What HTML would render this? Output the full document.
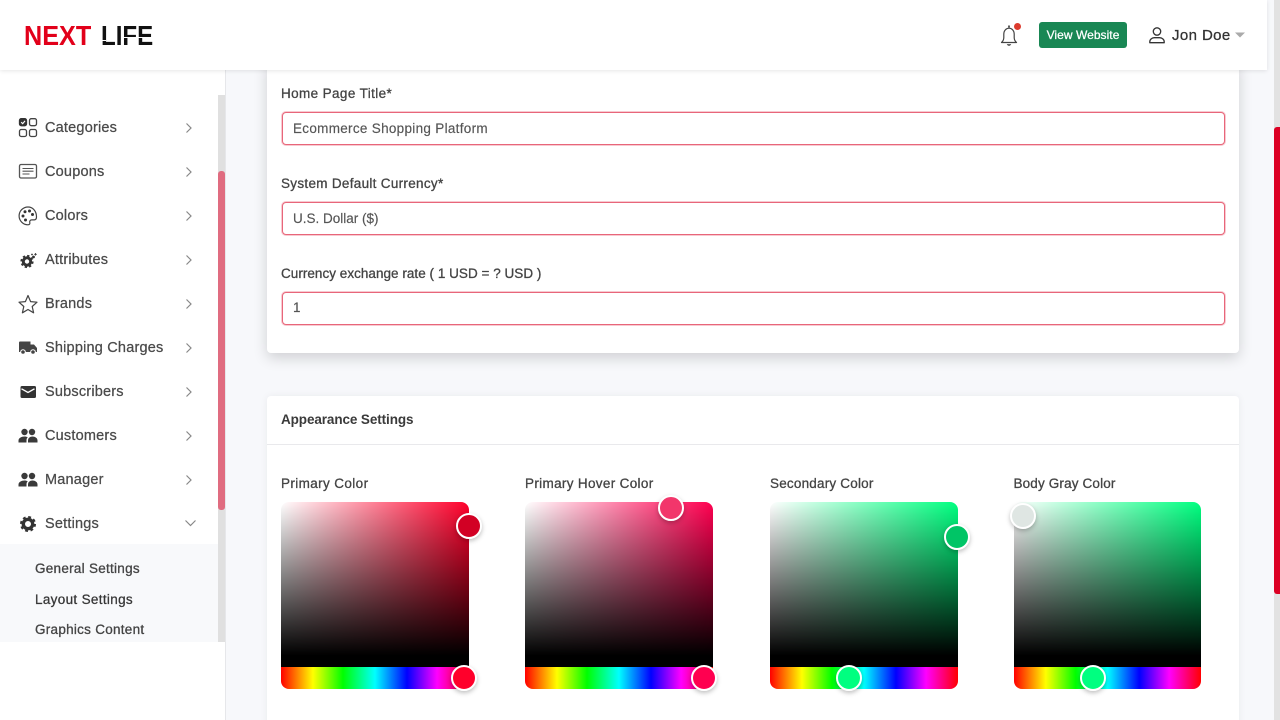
<!DOCTYPE html>
<html><head><meta charset="utf-8"><style>
html,body{margin:0;padding:0;width:1280px;height:720px;overflow:hidden;background:#f7f8fb}
body{font-family:"Liberation Sans",sans-serif;position:relative}
.a{position:absolute;white-space:nowrap}
.nav{left:45px;font-size:14.5px;line-height:20px;color:#4a4a4a;-webkit-text-stroke:.25px #4a4a4a;letter-spacing:.2px}
.sub{left:35px;font-size:13.5px;line-height:18px;color:#444;-webkit-text-stroke:.3px #444;letter-spacing:.27px}
.lbl{left:281px;font-size:13.5px;line-height:18px;color:#444;-webkit-text-stroke:.3px #444}
.inp{position:absolute;left:282px;width:941px;height:31px;border:1px solid #e8667a;border-radius:4px;background:#fff;box-shadow:0 0 0 1px rgba(232,102,122,.35)}
.val{left:293px;font-size:13.5px;line-height:18px;color:#555;-webkit-text-stroke:.15px #555}
.chev{position:absolute;left:184px}
.ic{position:absolute;left:17px;width:22px;height:22px}
.sat{position:absolute;top:502px;width:188px;height:165px;border-radius:8px 8px 0 0}
.hue{position:absolute;top:667px;width:188px;height:22px;border-radius:0 0 8px 8px;background:linear-gradient(to right,#f00 0%,#ff0 17%,#0f0 33%,#0ff 50%,#00f 67%,#f0f 83%,#f00 100%)}
.th{position:absolute;width:22px;height:22px;border:2px solid #fff;border-radius:50%;box-shadow:0 2px 5px rgba(0,0,0,.25)}
.cl{position:absolute;background:#fff;height:1px}
</style></head><body>

<!-- content cards -->
<div class="a" style="left:267px;top:60px;width:972px;height:293px;background:#fff;border-radius:4px;box-shadow:0 5px 14px rgba(0,0,0,.16)"></div>
<div class="a" style="left:267px;top:396px;width:972px;height:340px;background:#fff;border-radius:4px;box-shadow:0 0 8px rgba(0,0,0,.06)"></div>
<div class="a" style="left:267px;top:444px;width:972px;height:1px;background:#e9e9ec"></div>

<div class="a lbl" style="top:85px;letter-spacing:.38px">Home Page Title*</div>
<div class="inp" style="top:112px"></div>
<div class="a val" style="top:120px;letter-spacing:.3px">Ecommerce Shopping Platform</div>
<div class="a lbl" style="top:175px;letter-spacing:.3px">System Default Currency*</div>
<div class="inp" style="top:202px"></div>
<div class="a val" style="top:210px">U.S. Dollar ($)</div>
<div class="a lbl" style="top:265px;letter-spacing:.03px">Currency exchange rate ( 1 USD = ? USD )</div>
<div class="inp" style="top:292px"></div>
<div class="a val" style="top:299px">1</div>

<div class="a" style="left:281px;top:411px;font-size:13.5px;line-height:18px;font-weight:bold;color:#3a3a3a;letter-spacing:-.1px">Appearance Settings</div>

<div class="a lbl" style="top:475px;letter-spacing:.38px">Primary Color</div>
<div class="a lbl" style="top:475px;left:525px;letter-spacing:.33px">Primary Hover Color</div>
<div class="a lbl" style="top:475px;left:770px;letter-spacing:.2px">Secondary Color</div>
<div class="a lbl" style="top:475px;left:1013.5px;letter-spacing:.15px">Body Gray Color</div>

<div class="sat" style="left:281px;background:linear-gradient(to top,#000 7%,rgba(0,0,0,0)),linear-gradient(to right,#fff,#ff002b)"></div>
<div class="hue" style="left:281px"></div>
<div class="th" style="left:456px;top:513px;background:#d20024"></div>
<div class="th" style="left:451px;top:665px;background:#ff002b"></div>

<div class="sat" style="left:525px;background:linear-gradient(to top,#000 7%,rgba(0,0,0,0)),linear-gradient(to right,#fff,#ff0050)"></div>
<div class="hue" style="left:525px"></div>
<div class="th" style="left:658px;top:495px;background:#f2366b"></div>
<div class="th" style="left:691px;top:665px;background:#ff0050"></div>

<div class="sat" style="left:770px;background:linear-gradient(to top,#000 7%,rgba(0,0,0,0)),linear-gradient(to right,#fff,#00ff80)"></div>
<div class="hue" style="left:770px"></div>
<div class="th" style="left:944px;top:524px;background:#00c566"></div>
<div class="th" style="left:836px;top:665px;background:#00ff80"></div>

<div class="sat" style="left:1014px;width:187px;background:linear-gradient(to top,#000 7%,rgba(0,0,0,0)),linear-gradient(to right,#fff,#00ff80)"></div>
<div class="hue" style="left:1014px;width:187px"></div>
<div class="th" style="left:1010px;top:503px;background:#dfe6e3"></div>
<div class="th" style="left:1080px;top:665px;background:#00ff80"></div>

<!-- page scrollbar -->
<div class="a" style="left:1274px;top:0;width:6px;height:720px;background:#e2e2e2"></div>
<div class="a" style="left:1274px;top:127px;width:6px;height:467px;background:#dc0024;border-radius:3px 0 0 3px"></div>

<!-- sidebar -->
<div class="a" style="left:0;top:0;width:225px;height:720px;background:#fff;border-right:1px solid #e6e7ea"></div>
<div class="a" style="left:0;top:544px;width:218px;height:98px;background:#f8f9fb"></div>
<div class="a" style="left:218px;top:95px;width:7px;height:547px;background:#e0e0e0"></div>
<div class="a" style="left:218px;top:171px;width:7px;height:339px;background:#e06c80;border-radius:3px"></div>

<!-- header -->
<div class="a" style="left:0;top:0;width:1267px;height:70px;background:#fff;box-shadow:0 1px 4px rgba(0,0,0,.1)"></div>

<!-- logo -->
<div class="a" style="left:24px;top:20px;font-size:28px;line-height:32px;font-weight:bold;color:#e2001a;transform:scaleX(.9);transform-origin:0 0">NEXT</div>
<div class="a" style="left:101px;top:20px;font-size:28px;line-height:32px;font-weight:bold;color:#111;transform:scaleX(.86);transform-origin:0 0">LIFE</div>
<div class="cl" style="left:101px;top:40px;width:5px;height:1px"></div>
<div class="cl" style="left:122px;top:37px;width:32px;height:1px"></div>

<!-- nav text -->
<div class="a nav" style="top:118px">Categories</div>
<div class="a nav" style="top:162px">Coupons</div>
<div class="a nav" style="top:206px">Colors</div>
<div class="a nav" style="top:250px">Attributes</div>
<div class="a nav" style="top:294px">Brands</div>
<div class="a nav" style="top:338px">Shipping Charges</div>
<div class="a nav" style="top:382px">Subscribers</div>
<div class="a nav" style="top:426px">Customers</div>
<div class="a nav" style="top:470px">Manager</div>
<div class="a nav" style="top:514px">Settings</div>
<div class="a sub" style="top:560px">General Settings</div>
<div class="a sub" style="top:591px;color:#333;letter-spacing:.33px">Layout Settings</div>
<div class="a sub" style="top:621px">Graphics Content</div>

<!-- chevrons -->
<svg class="chev" style="top:122px" width="10" height="12" viewBox="0 0 10 12"><path d="M2.5 1.5 7 6 2.5 10.5" fill="none" stroke="#888" stroke-width="1.2"/></svg>
<svg class="chev" style="top:166px" width="10" height="12" viewBox="0 0 10 12"><path d="M2.5 1.5 7 6 2.5 10.5" fill="none" stroke="#888" stroke-width="1.2"/></svg>
<svg class="chev" style="top:210px" width="10" height="12" viewBox="0 0 10 12"><path d="M2.5 1.5 7 6 2.5 10.5" fill="none" stroke="#888" stroke-width="1.2"/></svg>
<svg class="chev" style="top:254px" width="10" height="12" viewBox="0 0 10 12"><path d="M2.5 1.5 7 6 2.5 10.5" fill="none" stroke="#888" stroke-width="1.2"/></svg>
<svg class="chev" style="top:298px" width="10" height="12" viewBox="0 0 10 12"><path d="M2.5 1.5 7 6 2.5 10.5" fill="none" stroke="#888" stroke-width="1.2"/></svg>
<svg class="chev" style="top:342px" width="10" height="12" viewBox="0 0 10 12"><path d="M2.5 1.5 7 6 2.5 10.5" fill="none" stroke="#888" stroke-width="1.2"/></svg>
<svg class="chev" style="top:386px" width="10" height="12" viewBox="0 0 10 12"><path d="M2.5 1.5 7 6 2.5 10.5" fill="none" stroke="#888" stroke-width="1.2"/></svg>
<svg class="chev" style="top:430px" width="10" height="12" viewBox="0 0 10 12"><path d="M2.5 1.5 7 6 2.5 10.5" fill="none" stroke="#888" stroke-width="1.2"/></svg>
<svg class="chev" style="top:474px" width="10" height="12" viewBox="0 0 10 12"><path d="M2.5 1.5 7 6 2.5 10.5" fill="none" stroke="#888" stroke-width="1.2"/></svg>
<svg class="a" style="left:184px;top:518px" width="13" height="10" viewBox="0 0 13 10"><path d="M1.5 2.5 6.5 7.5 11.5 2.5" fill="none" stroke="#888" stroke-width="1.2"/></svg>

<!-- Categories -->
<svg class="ic" style="top:117px" viewBox="0 0 22 22"><rect x="2.5" y="1.700" width="7" height="7" rx="1.800" fill="#333" stroke="#333" stroke-width="1.300"/><path d="M4.200 5.200 5.700 6.700 8 3.900" fill="none" stroke="#fff" stroke-width="1.100"/><rect x="12.500" y="1.700" width="7" height="7" rx="1.800" fill="none" stroke="#444" stroke-width="1.300"/><rect x="2.500" y="12.500" width="7" height="7" rx="1.800" fill="none" stroke="#444" stroke-width="1.300"/><rect x="12.500" y="12.500" width="7" height="7" rx="1.800" fill="none" stroke="#444" stroke-width="1.300"/></svg>
<!-- Coupons -->
<svg class="ic" style="top:161px" viewBox="0 0 22 22"><rect x="2.500" y="3.500" width="17" height="13.500" rx="1.500" fill="none" stroke="#555" stroke-width="1.300"/><path d="M5.500 7.500h11M5.500 10.200h11M5.500 13h7" stroke="#555" stroke-width="1.100" fill="none"/></svg>
<!-- Colors -->
<svg class="ic" style="top:205px" viewBox="0 0 22 22"><path d="M11 2a8.800 8.800 0 1 0 0 17.800c1.600 0 2.100-1 1.800-2.200-.4-1.500.4-2.700 2-2.700h2.400c1.500 0 2.300-1.200 2.300-3C19.500 6 15.700 2 11 2z" fill="none" stroke="#444" stroke-width="1.200"/><circle cx="6" cy="11" r="1.500" fill="#333"/><circle cx="8" cy="6.800" r="1.500" fill="#333"/><circle cx="12.500" cy="6" r="1.500" fill="#333"/><circle cx="15.500" cy="9.500" r="1.500" fill="#333"/><circle cx="8.500" cy="15" r="1.500" fill="#333"/></svg>
<!-- Attributes -->
<svg class="ic" style="top:249px" viewBox="0 0 22 22"><circle cx="10" cy="12.500" r="3.700" fill="none" stroke="#333" stroke-width="3"/><circle cx="10" cy="12.500" r="5.700" fill="none" stroke="#333" stroke-width="1.800" stroke-dasharray="2.300 2.170"/><circle cx="16.500" cy="8" r="1.400" fill="#333"/><circle cx="15" cy="5.500" r=".9" fill="#333"/><path d="M18.500 4v2.600M17.200 5.300h2.600" stroke="#333" stroke-width=".8"/></svg>
<!-- Brands -->
<svg class="ic" style="top:293px" viewBox="0 0 22 22"><path d="M11 2.500 13.600 8.600 20 9.200 15.200 13.500 16.600 19.800 11 16.500 5.400 19.800 6.800 13.500 2 9.200 8.400 8.600z" fill="none" stroke="#444" stroke-width="1.200" stroke-linejoin="round"/></svg>
<!-- Shipping -->
<svg class="ic" style="top:336px" viewBox="0 0 22 22"><path d="M2 6.500A1 1 0 0 1 3 5.500h10.500v3H17l3 3.500V16H2z" fill="#444"/><circle cx="6" cy="16" r="2.300" fill="#444" stroke="#fff" stroke-width="1"/><circle cx="16" cy="16" r="2.300" fill="#444" stroke="#fff" stroke-width="1"/></svg>
<!-- Subscribers -->
<svg class="ic" style="top:381px" viewBox="0 0 22 22"><rect x="3.500" y="5" width="15.500" height="12" rx="1.500" fill="#333"/><path d="M4.500 7.800 11 11.500 17.500 7.800" fill="none" stroke="#fff" stroke-width="1.400"/></svg>
<!-- Customers -->
<svg class="ic" style="top:425px" viewBox="0 0 22 22"><circle cx="7.500" cy="7" r="3.200" fill="#3a3a3a"/><circle cx="15" cy="7" r="3.200" fill="#3a3a3a"/><path d="M1.500 17.500v-2c0-2.500 3-4 6-4 1.300 0 2.400.3 3.300.8-1 .8-1.300 1.900-1.300 3.200v2z" fill="#3a3a3a"/><path d="M11 17.500v-2c0-2.500 2-4 4.500-4s5 1.500 5 4v2z" fill="#3a3a3a"/></svg>
<!-- Manager -->
<svg class="ic" style="top:469px" viewBox="0 0 22 22"><circle cx="7.500" cy="7" r="3.200" fill="#3a3a3a"/><circle cx="15" cy="7" r="3.200" fill="#3a3a3a"/><path d="M1.500 17.500v-2c0-2.500 3-4 6-4 1.300 0 2.400.3 3.300.8-1 .8-1.300 1.900-1.300 3.200v2z" fill="#3a3a3a"/><path d="M11 17.500v-2c0-2.500 2-4 4.500-4s5 1.500 5 4v2z" fill="#3a3a3a"/></svg>
<!-- Settings -->
<svg class="ic" style="top:513px" viewBox="0 0 22 22"><circle cx="11" cy="11" r="4.700" fill="none" stroke="#333" stroke-width="3.400"/><circle cx="11" cy="11" r="6.900" fill="none" stroke="#333" stroke-width="2.200" stroke-dasharray="2.800 2.620"/></svg>

<!-- header right -->
<svg class="a" style="left:998px;top:22px" width="24" height="26" viewBox="0 0 24 26"><path d="M3.500 20.500c1.500-1.300 2.300-2.800 2.300-5v-3.500c0-3.300 2.300-5.800 5.200-5.800s5.200 2.500 5.200 5.800v3.500c0 2.200.8 3.700 2.300 5z" fill="none" stroke="#444" stroke-width="1.200" stroke-linejoin="round"/><path d="M11 3.500v2" stroke="#333" stroke-width="1.600"/><path d="M8.800 22.300a2.300 2 0 0 0 4.400 0z" fill="#333"/></svg>
<div class="a" style="left:1014px;top:23px;width:7px;height:7px;border-radius:50%;background:#dc3b2e"></div>
<div class="a" style="left:1039px;top:22px;width:88px;height:26px;background:#198754;border-radius:3px;color:#fff;font-size:12px;line-height:26px;text-align:center;-webkit-text-stroke:.25px #fff;letter-spacing:.05px">View Website</div>
<svg class="a" style="left:1148px;top:26px" width="18" height="18" viewBox="0 0 18 18"><circle cx="9" cy="5.500" r="3.700" fill="none" stroke="#333" stroke-width="1.300"/><path d="M1.800 16.700v-1c0-2.300 2.200-4 4.500-4h5.400c2.300 0 4.500 1.700 4.500 4v1z" fill="none" stroke="#333" stroke-width="1.300" stroke-linejoin="round"/></svg>
<div class="a" style="left:1172px;top:26px;font-size:15px;line-height:20px;color:#333;-webkit-text-stroke:.3px #333;letter-spacing:.4px">Jon Doe</div>
<svg class="a" style="left:1235px;top:32px" width="10" height="6" viewBox="0 0 10 6"><path d="M0 .5h10L5 5.500z" fill="#aaa"/></svg>

</body></html>
